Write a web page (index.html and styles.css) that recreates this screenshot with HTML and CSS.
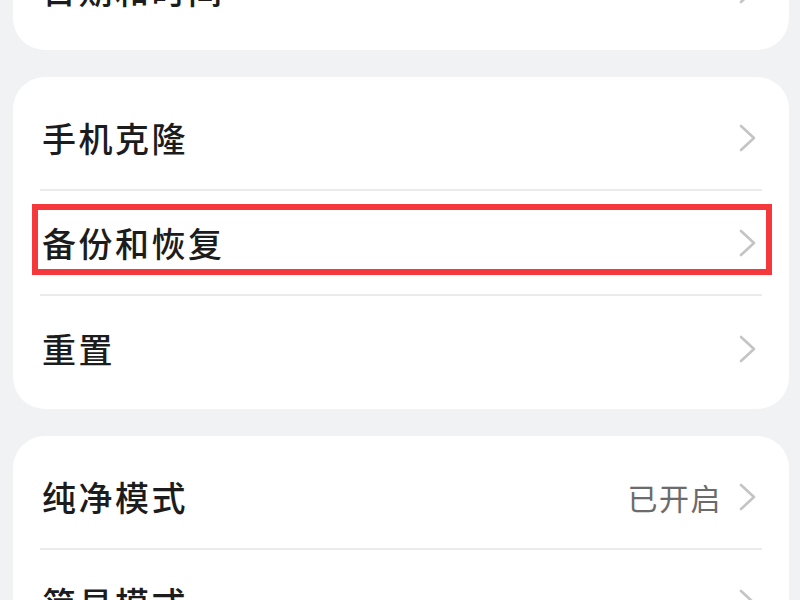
FILE: index.html
```html
<!DOCTYPE html>
<html lang="zh-CN">
<head>
<meta charset="utf-8">
<link rel="stylesheet" href="styles.css">
</head>
<body>
<div class="page">
  <section class="card card-first">
    <div class="row row-last">
      <span class="label">日期和时间</span>
      <span class="trail"><svg class="chev" viewBox="0 0 18 28"><path d="M2 2 L15 14 L2 26"/></svg></span>
    </div>
  </section>
  <section class="card">
    <div class="row">
      <span class="label">手机克隆</span>
      <span class="trail"><svg class="chev" viewBox="0 0 18 28"><path d="M2 2 L15 14 L2 26"/></svg></span>
    </div>
    <div class="row highlighted">
      <span class="label">备份和恢复</span>
      <span class="trail"><svg class="chev" viewBox="0 0 18 28"><path d="M2 2 L15 14 L2 26"/></svg></span>
      <span class="mark"></span>
    </div>
    <div class="row row-last">
      <span class="label">重置</span>
      <span class="trail"><svg class="chev" viewBox="0 0 18 28"><path d="M2 2 L15 14 L2 26"/></svg></span>
    </div>
  </section>
  <section class="card">
    <div class="row">
      <span class="label">纯净模式</span>
      <span class="trail"><span class="value">已开启</span><svg class="chev" viewBox="0 0 18 28"><path d="M2 2 L15 14 L2 26"/></svg></span>
    </div>
    <div class="row row-last">
      <span class="label">简易模式</span>
      <span class="trail"><svg class="chev" viewBox="0 0 18 28"><path d="M2 2 L15 14 L2 26"/></svg></span>
    </div>
  </section>
</div>
</body>
</html>
```
FILE: styles.css
```css
html, body {
  margin: 0;
  padding: 0;
  height: 100%;
  overflow: hidden;
  background: #f1f2f4;
  font-family: "Noto Sans CJK SC", "Noto Sans", sans-serif;
}
.page {
  display: flex;
  flex-direction: column;
  gap: 27px;
  padding: 0 11px 0 13px;
}
.card {
  background: #ffffff;
  border-radius: 32px;
  padding: 9px 0 8px;
}
.card-first {
  margin-top: -72px;
}
.row {
  position: relative;
  height: 105px;
  display: flex;
  align-items: center;
  justify-content: space-between;
  margin: 0 27px 0 27px;
  padding: 0 5px 0 2px;
  border-bottom: 2px solid #ebebeb;
  box-sizing: border-box;
}
.row-last {
  border-bottom: none;
}
.label {
  font-size: 34px;
  font-weight: 500;
  letter-spacing: 2.5px;
  color: #1c1c1c;
}
.trail {
  display: flex;
  align-items: center;
  gap: 17px;
}
.value {
  font-size: 30px;
  letter-spacing: 1.5px;
  color: #6b6b6b;
}
.chev {
  width: 18px;
  height: 28px;
  fill: none;
  stroke: #c4c4c4;
  stroke-width: 2.6;
  stroke-linecap: round;
  stroke-linejoin: round;
}
.mark {
  position: absolute;
  left: -8px;
  right: -10px;
  top: 13px;
  height: 71px;
  border: 6px solid #f4383b;
  box-sizing: border-box;
}
```
